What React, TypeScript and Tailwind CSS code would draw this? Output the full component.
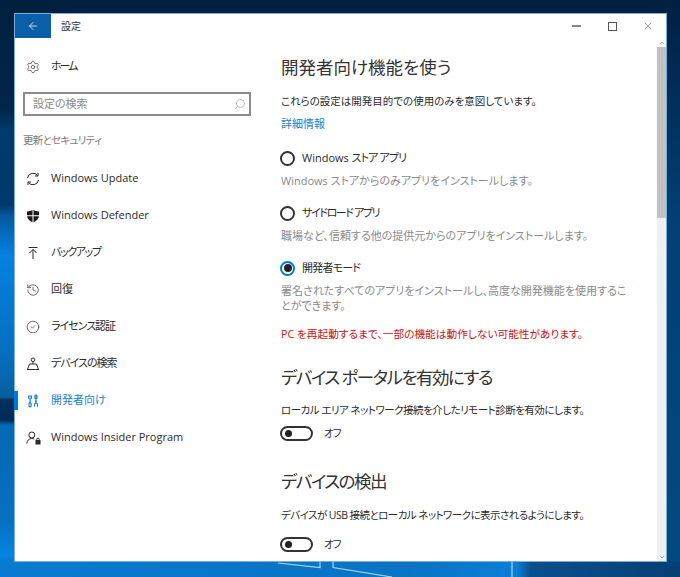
import { ArrowLeft, ChevronDown, ChevronUp, CircleCheck, History, Search, Settings, X } from "lucide-react";
import type { ReactNode } from "react";

const FONT = "font-['Open_Sans','Noto_Sans_CJK_JP',sans-serif] [font-feature-settings:'palt']";

const Sync = () => (
  <svg width="14" height="14" viewBox="0 0 14 14" fill="none" stroke="currentColor" strokeWidth="1">
    <path d="M1.5 6A5.6 5.6 0 0 1 11.6 3.6" />
    <path d="M12.5 8A5.6 5.6 0 0 1 2.4 10.4" />
    <path d="M12 1v3h-3M2 13v-3h3" />
  </svg>
);

const Shield = () => (
  <svg width="14" height="14" viewBox="0 0 14 14">
    <path d="M7 .8C5.2 2 3.2 2.5 1 2.5v4.2c0 3 2.500 5.300 6 6.800 3.500-1.500 6-3.800 6-6.800V2.500C10.800 2.500 8.800 2 7 .8z" fill="#1a1a1a" />
    <path d="M6.500 0h1v14h-1zM0 6.200h14v1H0z" fill="#fff" />
  </svg>
);

const Backup = () => (
  <svg width="14" height="14" viewBox="0 0 14 14" fill="none" stroke="currentColor" strokeWidth="1">
    <path d="M2.500 1.500h9M7 13V3.500M3.500 7 7 3.500 10.500 7" />
  </svg>
);

const FindDevice = () => (
  <svg width="14" height="14" viewBox="0 0 14 14" fill="none" stroke="currentColor" strokeWidth="1">
    <circle cx="7" cy="2.800" r="1.800" />
    <path d="M7 4.600v2.400M3.500 7h7l2 5.500h-11zM1 12.500h12" />
  </svg>
);

const Developer = () => (
  <svg className="ml-[2px]" width="10" height="14" viewBox="1 0 12 16" fill="none" stroke="currentColor" strokeWidth="1.400">
    <path d="M3.500 1v2.500M1.700 1.500v2.300a1.800 1.800 0 0 0 3.600 0V1.500M3.500 5.600V10" />
    <rect x="2.200" y="10" width="2.600" height="5" rx="1.200" />
    <path d="M10.500 1v9" />
    <rect x="9.200" y="1" width="2.600" height="4" rx="1" />
    <path d="M8.800 15v-2.500a1.800 1.800 0 0 1 3.600 0V15M10.500 7v3.500" />
  </svg>
);

const Insider = () => (
  <svg width="15" height="14" viewBox="0 0 15 14" fill="none" stroke="currentColor" strokeWidth="1">
    <circle cx="5.800" cy="4" r="3" />
    <path d="M.8 12.500C1 9.500 3 7.500 5.800 7.500c1 0 1.800.2 2.500.7" />
    <rect x="10" y="9.500" width="4" height="3.500" fill="currentColor" />
    <path d="M10.800 9.500V8.300a1.200 1.200 0 0 1 2.400 0v1.200" />
  </svg>
);

const nav: { icon: ReactNode; label: string; track?: string; active?: boolean }[] = [
  { icon: <Sync />, label: "Windows Update" },
  { icon: <Shield />, label: "Windows Defender" },
  { icon: <Backup />, label: "バックアップ", track: "tracking-[-1.4px]" },
  { icon: <History size={14} strokeWidth={1.100} />, label: "回復" },
  { icon: <CircleCheck size={14} strokeWidth={1.100} />, label: "ライセンス認証", track: "tracking-[-1px]" },
  { icon: <FindDevice />, label: "デバイスの検索", track: "tracking-[-1px]" },
  { icon: <Developer />, label: "開発者向け", active: true },
  { icon: <Insider />, label: "Windows Insider Program" },
];

function NavRow({ icon, label, track, active }: { icon: ReactNode; label: string; track?: string; active?: boolean }) {
  return (
    <div className={`relative flex h-[37px] items-center pl-[11px] text-[11px] ${active ? "text-[#1a7fd0]" : "text-[#2b2b2b]"}`}>
      {active && <div className="absolute -left-[1px] top-[9px] h-[19px] w-[4px] bg-[#0078d7]" />}
      <div className="flex w-[25px] items-center">{icon}</div>
      <span className={track}>{label}</span>
    </div>
  );
}

function Radio({ label, desc, checked }: { label: ReactNode; desc: ReactNode; checked?: boolean }) {
  return (
    <div>
      <div className="-ml-[1px] flex h-[22px] items-center gap-[7px]">
        <div className={`flex h-[15px] w-[15px] items-center justify-center rounded-full border-2 ${checked ? "border-[#0078d7]" : "border-[#333333]"}`}>
          {checked && <div className="h-[8px] w-[8px] rounded-full bg-[#222222]" />}
        </div>
        <span className="text-[11px] text-[#2b2b2b]">{label}</span>
      </div>
      <div className="pt-[4px] text-[11px] leading-[15px] text-[#8a8a8a]">{desc}</div>
    </div>
  );
}

function Toggle() {
  return (
    <div className="-ml-[1px] flex h-[15px] items-center gap-[11px]">
      <div className="flex h-[15px] w-[33px] items-center rounded-full border-2 border-[#333333] pl-[3px]">
        <div className="h-[7px] w-[7px] rounded-full bg-[#222222]" />
      </div>
      <span className="text-[10.500px] tracking-[-1px] text-[#2b2b2b]">オフ</span>
    </div>
  );
}

export default function App() {
  return (
    <div
      className={`relative h-[577px] w-[680px] overflow-hidden pl-[14px] pt-[13px] ${FONT} bg-[linear-gradient(to_bottom,#01203f_0px,#01264c_110px,#013a6b_130px,#03396c_205px,#05579c_215px,#0581e0_255px,#0670c4_345px,#06609f_397px,#01315f_400px,#012a55_420px,#0568b5_425px,#0670c0_520px,#0584e0_555px,#0568b5_577px)]`}
    >
      {/* wallpaper: right side and bottom band */}
      <div className="absolute inset-y-0 right-0 w-[15px] bg-[linear-gradient(to_bottom,#011f42,#012d58_90px,#033f74_220px,#034a82_577px)]" />
      <div className="absolute inset-x-0 bottom-0 h-[15px] bg-[linear-gradient(to_right,#0a7ad0,#0a73c4_60%,#0c7ed6_76%,#0b4f8e_78%,#063f74)]" />
      <svg className="absolute bottom-0 left-0" width="680" height="15" fill="none" stroke="#a8d8f0" strokeWidth="1.200">
        <path d="M278 1 320 5.500V0M333 0v5.500L392 15M512 0v15" />
      </svg>

      <div className="relative flex h-[549px] w-[653px] flex-col border border-[#7aaed8] bg-white text-[#2b2b2b]">
        <div className="flex h-[24px] shrink-0 items-center">
          <div className="flex h-[24px] w-[36px] items-center justify-center bg-[#0a5fa8] text-white">
            <ArrowLeft size={12} strokeWidth={1.500} />
          </div>
          <span className="ml-[10px] text-[10px] text-[#333333]">設定</span>
          <div className="ml-auto flex items-center text-[#555555]">
            <div className="flex w-[36px] justify-center"><div className="h-[2px] w-[9px] bg-[#888888]" /></div>
            <div className="flex w-[36px] justify-center"><div className="h-[9px] w-[9px] border-[1.500px] border-[#555555]" /></div>
            <div className="flex w-[36px] justify-center"><X size={12} strokeWidth={1.100} /></div>
          </div>
        </div>

        <div className="flex min-h-0 flex-1">
          <div className="w-[244px] shrink-0">
            <div className="flex h-[43px] items-center pl-[11px] pt-[14px] text-[11px]">
              <div className="flex w-[25px] items-center"><Settings size={14} strokeWidth={1.100} /></div>
              <span className="tracking-[-2px]">ホーム</span>
            </div>
            <div className="ml-[8px] mt-[11px] flex h-[24px] w-[228px] items-center border-2 border-[#8c8c8c] pl-[8px] pr-[3px] text-[11px] text-[#8a8a8a]">
              <span>設定の検索</span>
              <Search size={12} strokeWidth={1.100} className="ml-auto -scale-x-100" />
            </div>
            <div className="ml-[8px] mt-[13px] text-[10.500px] leading-[22px] tracking-[-0.7px] text-[#7c7c7c]">更新とセキュリティ</div>
            <div className="mt-[9px]">
              {nav.map((n) => (
                <NavRow key={n.label} {...n} />
              ))}
            </div>
          </div>

          <div className="min-w-0 flex-1 overflow-hidden pl-[22px] pr-[8px]">
            <h1 className="mt-[16px] text-[17.500px] leading-[26px] text-[#333333]">開発者向け機能を使う</h1>
            <p className="mt-[11px] text-[10.500px] leading-[20px]">これらの設定は開発目的での使用のみを意図しています。</p>
            <p className="mt-[3px] text-[11px] leading-[20px] text-[#1a7fd0]">詳細情報</p>

            <div className="mt-[13px] flex flex-col gap-[14px]">
              <Radio label={<>Windows <span className="tracking-[-0.9px]">ストア アプリ</span></>} desc="Windows ストアからのみアプリをインストールします。" />
              <Radio label={<span className="tracking-[-1.400px]">サイドロード アプリ</span>} desc="職場など、信頼する他の提供元からのアプリをインストールします。" />
              <Radio checked label={<span className="tracking-[-0.8px]">開発者モード</span>} desc={<>署名されたすべてのアプリをインストールし、高度な開発機能を使用するこ<br />とができます。</>} />
            </div>

            <p className="mt-[11px] text-[10.700px] leading-[20px] text-[#c81414]">PC を再起動するまで、一部の機能は動作しない可能性があります。</p>

            <h2 className="mt-[20px] text-[17.500px] leading-[26px] tracking-[-1.5px] text-[#333333]">デバイス ポータルを有効にする</h2>
            <p className="mt-[10px] text-[10.500px] leading-[20px] tracking-[-0.5px]">ローカル エリア ネットワーク接続を介したリモート診断を有効にします。</p>
            <div className="mt-[6px]"><Toggle /></div>

            <h2 className="mt-[27px] text-[17.500px] leading-[26px] tracking-[-1.5px] text-[#333333]">デバイスの検出</h2>
            <p className="mt-[11px] text-[10.500px] leading-[20px] tracking-[-0.55px]">デバイスが USB 接続とローカル ネットワークに表示されるようにします。</p>
            <div className="mt-[12px]"><Toggle /></div>
          </div>

          <div className="flex w-[9px] shrink-0 flex-col bg-[#f0f0f0] text-[#888888]">
            <div className="flex h-[9px] items-center justify-center bg-white"><ChevronUp size={8} /></div>
            <div className="h-[171px] bg-[#c2c2c2]" />
            <div className="mt-auto flex h-[9px] items-center justify-center"><ChevronDown size={8} /></div>
          </div>
        </div>
      </div>
    </div>
  );
}
